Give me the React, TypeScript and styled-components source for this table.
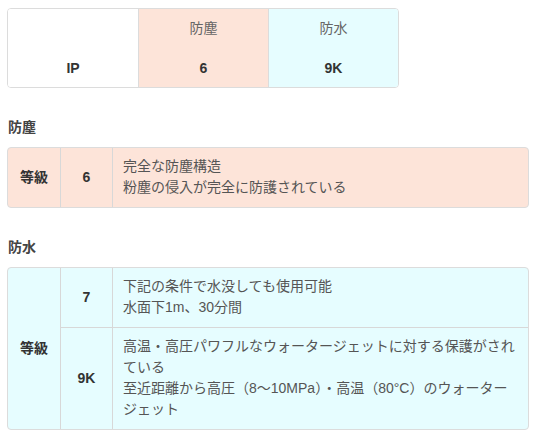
import React from "react";
import styled, { createGlobalStyle } from "styled-components";

const GlobalStyle = createGlobalStyle`
  body {
    margin: 0;
    background: #ffffff;
    font-family: "Liberation Sans", "Noto Sans CJK JP", sans-serif;
    font-size: 14px;
    color: #555;
  }
`;

const Page = styled.div`
  padding: 8px 7px;
`;

const Summary = styled.div`
  display: grid;
  grid-template-columns: 130px 130px 130px;
  grid-template-rows: 39px 39px;
  width: 390px;
  border: 1px solid #dcdcdc;
  border-radius: 4px;
  overflow: hidden;
`;

const SummaryCell = styled.div<{ $bg: string; $bold?: boolean; $first?: boolean }>`
  background: ${(p) => p.$bg};
  border-left: ${(p) => (p.$first ? "none" : "1px solid #dcdcdc")};
  display: flex;
  align-items: center;
  justify-content: center;
  font-weight: ${(p) => (p.$bold ? "bold" : "normal")};
  color: ${(p) => (p.$bold ? "#333" : "#666")};
  padding-bottom: ${(p) => (p.$bold ? "0" : "3px")};
`;

const Heading = styled.h3`
  margin: 29px 1px 10px;
  font-size: 14px;
  font-weight: bold;
  color: #444;
  line-height: 20px;
`;

const DetailTable = styled.div<{ $bg: string }>`
  display: grid;
  grid-template-columns: 52px 52px 1fr;
  width: 520px;
  background: ${(p) => p.$bg};
  border: 1px solid #dcdcdc;
  border-radius: 4px;
  overflow: hidden;
`;

const Cell = styled.div<{ $bold?: boolean; $rows?: number; $first?: boolean; $top?: boolean }>`
  grid-row: ${(p) => (p.$rows ? `span ${p.$rows}` : "auto")};
  border-left: ${(p) => (p.$first ? "none" : "1px solid #d8d8d8")};
  border-top: ${(p) => (p.$top ? "1px solid #d8d8d8" : "none")};
  display: flex;
  align-items: center;
  justify-content: ${(p) => (p.$bold ? "center" : "flex-start")};
  font-weight: ${(p) => (p.$bold ? "bold" : "normal")};
  color: ${(p) => (p.$bold ? "#333" : "#555")};
  padding: 8px 10px 9px;
  line-height: 21px;
`;

const Lines = styled.div`
  display: flex;
  flex-direction: column;
`;

const PEACH = "#fde4d9";
const CYAN = "#e6fdff";

export default function App() {
  return (
    <Page>
      <GlobalStyle />
      <Summary>
        <SummaryCell $bg="#fff" $first />
        <SummaryCell $bg={PEACH}>防塵</SummaryCell>
        <SummaryCell $bg={CYAN}>防水</SummaryCell>
        <SummaryCell $bg="#fff" $first $bold>IP</SummaryCell>
        <SummaryCell $bg={PEACH} $bold>6</SummaryCell>
        <SummaryCell $bg={CYAN} $bold>9K</SummaryCell>
      </Summary>

      <Heading>防塵</Heading>
      <DetailTable $bg={PEACH}>
        <Cell $first $bold>等級</Cell>
        <Cell $bold>6</Cell>
        <Cell>
          <Lines>
            <span>完全な防塵構造</span>
            <span>粉塵の侵入が完全に防護されている</span>
          </Lines>
        </Cell>
      </DetailTable>

      <Heading>防水</Heading>
      <DetailTable $bg={CYAN}>
        <Cell $first $bold $rows={2}>等級</Cell>
        <Cell $bold>7</Cell>
        <Cell>
          <Lines>
            <span>下記の条件で水没しても使用可能</span>
            <span>水面下1m、30分間</span>
          </Lines>
        </Cell>
        <Cell $bold $top>9K</Cell>
        <Cell $top>
          <Lines>
            <span>高温・高圧パワフルなウォータージェットに対する保護がされている</span>
            <span>至近距離から高圧（8〜10MPa）・高温（80°C）のウォータージェット</span>
          </Lines>
        </Cell>
      </DetailTable>
    </Page>
  );
}
